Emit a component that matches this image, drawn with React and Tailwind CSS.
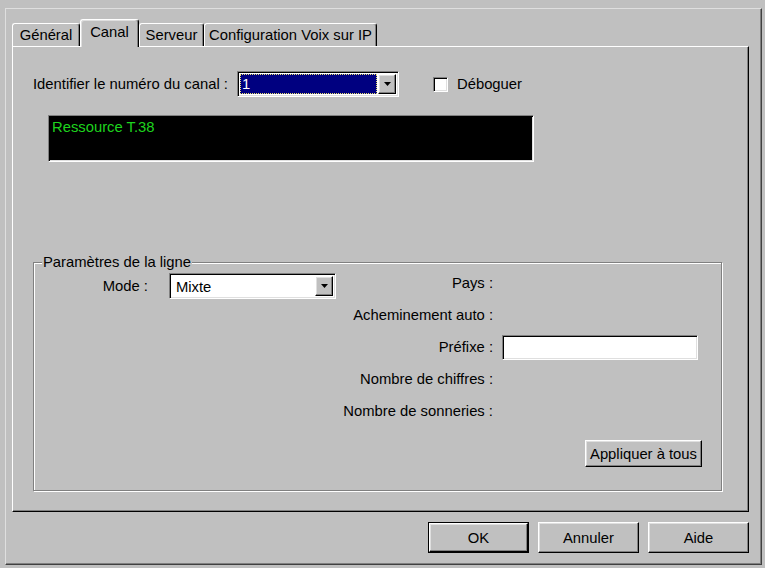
import React from 'react'

const raised = 'border border-t-white border-l-white border-r-black border-b-black shadow-[inset_-1px_-1px_0_#808080,inset_1px_1px_0_#dfdfdf]'
const sunken = 'border border-t-[#808080] border-l-[#808080] border-r-white border-b-white shadow-[inset_1px_1px_0_#000,inset_-1px_-1px_0_#dfdfdf]'

function Arrow() {
    return (
        <svg width="7" height="4" viewBox="0 0 7 4">
            <path d="M0 0h7L3.5 4z" fill="#000" />
        </svg>
    )
}

function DropButton({ className }) {
    return (
        <div className={`flex items-center justify-center bg-[#c0c0c0] ${raised} ${className}`}>
            <Arrow />
        </div>
    )
}

function Tab({ label, active, width }) {
    if (active) {
        return (
            <div className={`relative z-10 -mb-[1px] h-[28px] ${width} flex items-center justify-center pb-[3px] bg-[#c0c0c0] border-l border-t border-r border-l-white border-t-white border-r-black rounded-t-[3px] shadow-[inset_-1px_0_0_#808080,inset_1px_1px_0_#dfdfdf]`}>
                {label}
            </div>
        )
    }
    return (
        <div className={`h-[23px] ${width} flex items-center justify-center bg-[#c0c0c0] border-l border-t border-r border-l-white border-t-white border-r-black rounded-t-[3px] shadow-[inset_-1px_0_0_#808080]`}>
            {label}
        </div>
    )
}

function Button({ label, width, height, isDefault }) {
    if (isDefault) {
        return (
            <div className={`${width} ${height} border border-black`}>
                <div className={`h-full w-full flex items-center justify-center ${raised}`}>{label}</div>
            </div>
        )
    }
    return (
        <div className={`${width} ${height} flex items-center justify-center ${raised}`}>{label}</div>
    )
}

const rightRows = ['Pays :', 'Acheminement auto :', 'Préfixe :', 'Nombre de chiffres :', 'Nombre de sonneries :']

export default function App() {
    return (
        <div className="w-[765px] h-[568px] bg-[#c0c0c0] pt-[8px] pl-[5px] overflow-hidden text-[14.8px] leading-[18px] text-black font-['Liberation_Sans',Arial,sans-serif]">
            <div className="w-[757px] h-[557px] border border-t-[#dfdfdf] border-l-[#dfdfdf] border-r-[#404040] border-b-[#404040] shadow-[inset_-1px_-1px_0_#808080]">
                {/* Tabs */}
                <div className="pl-[6px] pt-[10px]">
                    <div className="flex items-end h-[27px]">
                        <Tab label="Général" width="w-[68px]" />
                        <Tab label="Canal" width="w-[59px]" active />
                        <Tab label="Serveur" width="w-[65px]" />
                        <Tab label="Configuration Voix sur IP" width="w-[173px]" />
                    </div>

                    {/* Panel */}
                    <div className="w-[737px] h-[466px] border border-t-white border-l-white border-r-black border-b-black shadow-[inset_-1px_-1px_0_#808080]">
                        <div className="pt-[25px] pl-[20px] flex items-center h-[49px]">
                            <span className="w-[204px] whitespace-nowrap">Identifier le numéro du canal :</span>
                            <div className={`w-[162px] h-[26px] bg-white flex items-center p-[2px] ${sunken}`}>
                                <div className="flex-1 h-full mr-[1px] bg-[#000080] border border-dotted border-[#e8e070] text-white flex items-center pl-[1px]">1</div>
                                <DropButton className="w-[18px] h-full" />
                            </div>
                            <div className={`ml-[34px] w-[15px] h-[15px] bg-white ${sunken}`} />
                            <span className="ml-[9px]">Déboguer</span>
                        </div>

                        <div className={`ml-[35px] mt-[19px] w-[486px] h-[47px] bg-black ${sunken}`}>
                            <div className="pl-[3px] pt-[2px] text-[#1ed41e]">Ressource T.38</div>
                        </div>

                        {/* Group box */}
                        <div className="relative ml-[20px] mt-[100px] w-[689px] h-[229px] border border-[#808080] shadow-[inset_1px_1px_0_#fff,1px_1px_0_#fff]">
                            <span className="absolute left-[8px] top-[-10px] px-[1px] bg-[#c0c0c0]">Paramètres de la ligne</span>
                            <div className="flex">
                                <div className="w-[306px] pt-[10px]">
                                    <div className="flex items-center">
                                        <span className="w-[114px] text-right">Mode :</span>
                                        <div className={`ml-[21px] w-[167px] h-[26px] bg-white flex items-center p-[2px] ${sunken}`}>
                                            <span className="flex-1 pl-[4px] pt-[2px]">Mixte</span>
                                            <DropButton className="w-[18px] h-[20px]" />
                                        </div>
                                    </div>
                                </div>
                                <div className="pt-[4px] grid grid-cols-[153px_auto]">
                                    {rightRows.map(label => (
                                        <React.Fragment key={label}>
                                            <div className="h-[32px] flex items-center justify-end whitespace-nowrap">{label}</div>
                                            <div className="h-[32px] flex items-center">
                                                {label === 'Préfixe :' && (
                                                    <div className={`ml-[9px] w-[196px] h-[25px] bg-white ${sunken}`} />
                                                )}
                                            </div>
                                        </React.Fragment>
                                    ))}
                                </div>
                            </div>
                            <div className="flex justify-end pr-[19px] mt-[13px]">
                                <Button label="Appliquer à tous" width="w-[117px]" height="h-[27px]" />
                            </div>
                        </div>
                    </div>
                </div>

                {/* Dialog buttons */}
                <div className="flex justify-end gap-[9px] pr-[12px] mt-[10px]">
                    <Button label="OK" width="w-[101px]" height="h-[31px]" isDefault />
                    <Button label="Annuler" width="w-[101px]" height="h-[31px]" />
                    <Button label="Aide" width="w-[101px]" height="h-[31px]" />
                </div>
            </div>
        </div>
    )
}
